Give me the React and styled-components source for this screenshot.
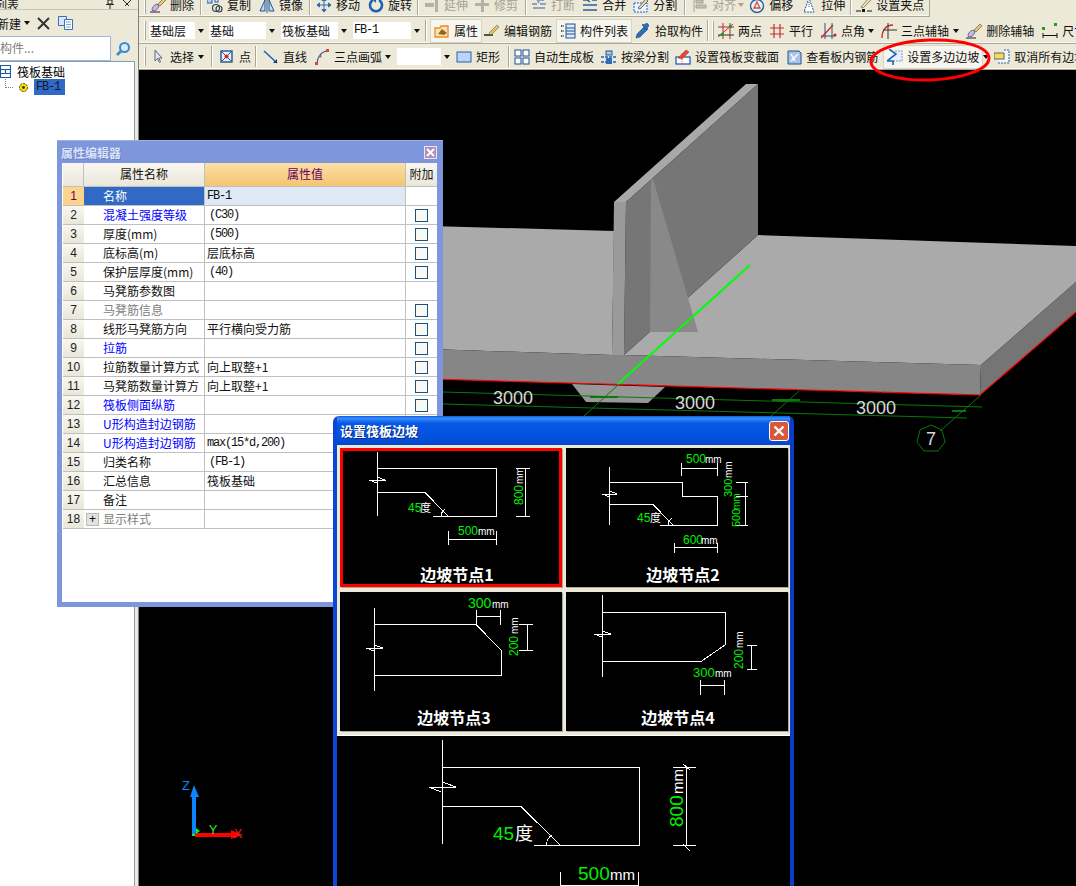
import React from "react";
import styled, { createGlobalStyle, css } from "styled-components";

const GlobalStyle = createGlobalStyle`
  html, body { margin: 0; padding: 0; background: #000; }
  body { font-family: "Noto Sans CJK SC", "Liberation Sans", sans-serif; font-size: 12px; }
`;

const Page = styled.div`
  position: relative;
  display: flex;
  width: 1076px;
  height: 886px;
  overflow: hidden;
  background: #000;
`;

/* ---------- left list panel ---------- */
const Side = styled.aside`
  display: flex;
  flex-direction: column;
  flex: 0 0 139px;
  box-sizing: border-box;
  background: #ece9d8;
  border-right: 1px solid #808080;
`;
const SideHead = styled.div`
  display: flex;
  align-items: center;
  gap: 8px;
  height: 9px;
  padding-right: 6px;
  border-bottom: 1px solid #c9c6b6;
  color: #222;
  line-height: 9px;
  overflow: hidden;
`;
const SideName = styled.span`
  flex: 1;
  margin-left: -5px;
`;
const SideTools = styled.div`
  display: flex;
  align-items: center;
  height: 26px;
  color: #111;
`;
const NewLabel = styled.span`
  margin-left: -3px;
`;
const SearchRow = styled.div`
  display: flex;
  align-items: center;
  gap: 4px;
  height: 25px;
`;
const SearchBox = styled.div`
  box-sizing: border-box;
  width: 111px;
  height: 25px;
  background: #fff;
  border: 1px solid #9db8d2;
  border-left: 0;
  color: #808080;
  line-height: 22px;
`;
const Tree = styled.div`
  flex: 1;
  margin-right: 3px;
  padding-top: 1px;
  background: #fff;
  border-top: 1px solid #7f9db9;
  border-right: 1px solid #7f9db9;
`;
const TreeRow = styled.div`
  display: flex;
  align-items: center;
  gap: ${(p) => p.$gap || 6}px;
  height: 16px;
  color: #000;
`;
const TreeLine = styled.span`
  width: 7px;
  height: 8px;
  margin: -8px 0 0 5px;
  border-left: 1px dotted #808080;
  border-bottom: 1px dotted #808080;
`;
const Selected = styled.span`
  width: 29px;
  height: 16px;
  padding-left: 2px;
  background: #316ac5;
  color: #0c1a30;
  font: 12px/16px "Liberation Mono", monospace;
  letter-spacing: -1.2px;
`;
const SideIcon = styled.svg`
  display: block;
  flex: 0 0 auto;
  margin-left: ${(p) => p.$ml || 0}px;
`;

/* ---------- toolbars ---------- */
const Main = styled.main`
  display: flex;
  flex: 1;
  flex-direction: column;
  min-width: 0;
  background: #ece9d8;
`;
const Bar = styled.div`
  display: flex;
  flex: 0 0 auto;
  align-items: center;
  box-sizing: border-box;
  width: ${(p) => p.$w || "auto"};
  height: ${(p) => p.$h}px;
  margin-bottom: ${(p) => p.$mb || 0}px;
  padding-left: 5px;
  padding-bottom: ${(p) => p.$pb || 0}px;
  background: #ece9d8;
  border-bottom: 1px solid #aca899;
  border-right: ${(p) => (p.$w ? "1px solid #aca899" : "0")};
  box-shadow: inset 0 -1px 0 #f8f7f0;
  overflow: hidden;
  white-space: nowrap;
`;
const Grip = styled.i`
  flex: 0 0 2px;
  height: 19px;
  margin-left: ${(p) => p.$ml || 0}px;
  border-left: 1px solid #fff;
  border-right: 1px solid #aca899;
  box-sizing: border-box;
`;
const Sep = styled.i`
  flex: 0 0 2px;
  height: 21px;
  margin-left: ${(p) => p.$ml}px;
  border-left: 1px solid #aca899;
  border-right: 1px solid #fff;
  box-sizing: border-box;
`;
const Tool = styled.span`
  display: flex;
  flex: 0 0 auto;
  align-items: center;
  gap: 4px;
  height: 16px;
  margin-left: ${(p) => p.$ml}px;
  color: ${(p) => (p.$off ? "#a5a294" : "#111")};
  line-height: 16px;
  ${(p) =>
    p.$on &&
    css`
      background: #f6f5ee;
      box-shadow: 0 0 0 3px #f6f5ee, 0 0 0 4px #d8d5c5;
    `}
`;
const Caret = styled.i`
  flex: 0 0 0;
  margin-left: ${(p) => p.$ml}px;
  border-left: 3.5px solid transparent;
  border-right: 3.5px solid transparent;
  border-top: 4px solid ${(p) => (p.$off ? "#a5a294" : "#111")};
`;
const Combo = styled.span`
  position: relative;
  flex: 0 0 ${(p) => p.$w}px;
  box-sizing: border-box;
  height: 17px;
  margin-left: ${(p) => p.$ml}px;
  padding-left: 1px;
  background: #fff;
  color: #111;
  font-family: ${(p) => (p.$mono ? '"Liberation Mono", monospace' : "inherit")};
  letter-spacing: ${(p) => (p.$mono ? "-1.2px" : "0")};
  line-height: 17px;
  &::after {
    content: "";
    position: absolute;
    top: 0;
    right: 0;
    width: 10px;
    height: 17px;
    background: #ece9d8;
  }
  &::before {
    content: "";
    position: absolute;
    z-index: 1;
    top: 7px;
    right: 1.5px;
    border-left: 3.5px solid transparent;
    border-right: 3.5px solid transparent;
    border-top: 4px solid #111;
  }
`;
const IconSvg = styled.svg`
  display: block;
  flex: 0 0 16px;
  width: 16px;
  height: 16px;
`;

const ink = { fill: "none", strokeWidth: 1.2 };
const icons = {
  brush: <><path d="M0 15h10" stroke="#222" /><path d="M2 13c0-3 2-5 5-6l2 2c-1 3-3 5-6 5z" fill="#c8b8e0" stroke="#5a4a88" strokeWidth=".8" /><path d="M8 7 14 1l2 2-6 6z" fill="#e4c47a" stroke="#76602a" strokeWidth=".7" /></>,
  copy: <><rect x="0" y="1" width="5" height="5" fill="#b8d0f0" stroke="#2a5a9a" /><circle cx="9" cy="11" r="3.5" {...ink} stroke="#345" /><circle cx="12" cy="12" r="3" {...ink} stroke="#345" /><rect x="8" y="2" width="3" height="3" fill="#e4ecf8" stroke="#2a5a9a" /></>,
  mirror: <><path d="M1 14 6 3v11zM15 14 10 3v11z" fill="#c5d8f2" stroke="#23558f" /><path d="M8 0v16" stroke="#23558f" /></>,
  move: <path d="M8 1v14M1 8h14M8 1 6 3.5h4zM8 15l-2-2.5h4zM1 8l2.5-2v4zM15 8l-2.5-2v4z" fill="#2f6db5" stroke="#2f6db5" />,
  rotate: <><path d="M5 3a6 6 0 1 0 6 0" fill="none" stroke="#1f63b8" strokeWidth="2.6" /><path d="M8 0v6L5 3z" fill="#1f63b8" /></>,
  extend: <path d="M1 6h9v4H1zM11 1h3v14h-3z" fill="#b5b2a4" />,
  trim: <path d="M1 6h14v3H1zM7 1h3v14H7z" fill="#b5b2a4" />,
  split: <path d="M1 7h5M9 7h6M2 11h12M6 2l2 4M8 3h5" fill="none" stroke="#6f8db0" strokeWidth="1.6" />,
  merge: <path d="M1 3h6M10 3h5M1 8h14M1 13h14M8 1l-3 2 3 2" fill="none" stroke="#2f5f96" strokeWidth="1.4" />,
  cut: <><rect x="1" y="6" width="13" height="9" fill="#eef4ff" stroke="#1c5fdc" strokeDasharray="2 1" /><path d="M5 11 13 2l2 2-8 8z" fill="#e6dcae" stroke="#333" strokeWidth=".7" /></>,
  align: <path d="M2 1v14M4 3h7v3H4zM4 8h10v3H4z" fill="#c5c2b4" stroke="#a5a294" />,
  offset: <><circle cx="8" cy="9" r="6.5" fill="#e8f0fa" stroke="#24609a" strokeWidth="1.4" /><path d="M8 5 11 11H5z" fill="none" stroke="#d84a30" strokeWidth="1.3" /></>,
  stretch: <><path d="M8 1 3 15h10z" fill="#fff" stroke="#23558f" strokeDasharray="2 1" /><path d="M8 5v6" stroke="#23558f" strokeDasharray="1 1" /></>,
  grip: <><path d="M5 10 13 1l2 2-8 8z" fill="#efe2a0" stroke="#665" strokeWidth=".7" /><path d="M0 14h5M11 14h5" stroke="#111" /><rect x="6" y="12" width="3" height="3" fill="#111" /></>,
  attr: <><path d="M1 5h5l1-2h7v11H1z" fill="#fbe3b0" stroke="#f08a24" strokeWidth="1.3" /><path d="M4 11 8 6l5 4-3 2z" fill="#8a6a20" /></>,
  edit: <><path d="M0 12h9" stroke="#111" strokeWidth="1.4" /><path d="M5 10 13 2l2 2-8 8z" fill="#eac25a" stroke="#775" strokeWidth=".7" /></>,
  list: <><path d="M1 3h3M1 8h3M1 13h3" stroke="#222" strokeDasharray="1.4 1" strokeWidth="1.6" /><rect x="6" y="1" width="9" height="14" fill="#dfe9f7" stroke="#23558f" /><path d="M6 5h9M6 8h9M6 11h9" stroke="#23558f" /></>,
  pick: <path d="M1 15 2 11l7-7 3 3-7 7zM9 2c2-2 3-2 4-1s1 3-1 4l1 1-1 1-5-5 1-1z" fill="#2f6db5" stroke="#174a86" strokeWidth=".6" />,
  twopt: <><path d="M0 14 15 1" stroke="#d42424" /><path d="M5 0v16M12 0v16M0 4h16" stroke="#b02a2a" /><path d="M0 12h16" stroke="#333" /><rect x="3" y="10" width="3" height="3" fill="#2a9a2a" /><rect x="11" y="2" width="3" height="3" fill="#2a9a2a" /></>,
  parallel: <path d="M1 5h14M1 11h14M5 1v14M11 1v14" stroke="#c03030" strokeWidth="1.2" fill="none" />,
  angle: <><path d="M4 0v16M11 0v16M0 13h14" stroke="#23558f" /><path d="M0 15 12 2" stroke="#d42424" strokeWidth="1.3" /><circle cx="14" cy="12" r="1.6" fill="#d42424" /></>,
  arcaxis: <><path d="M1 15C1 7 5 2 12 2" fill="none" stroke="#d42424" strokeWidth="1.3" /><path d="M7 0v16M2 7h14" stroke="#333" /></>,
  ruler: <><rect x="0" y="4" width="3" height="3" fill="#1ea01e" /><rect x="12" y="0" width="3" height="3" fill="#1ea01e" /><path d="M1 10v5M15 10v5M1 12.5h14" stroke="#111" /></>,
  cursor: <path d="M5 1v11l2.5-2.5 2 4 1.2-.8-2-3.6h3.3z" fill="#dfe6f4" stroke="#667" />,
  dot: <><rect x="2" y="2" width="11" height="11" fill="#e8eefa" stroke="#23558f" strokeWidth="1.4" /><path d="M2 2 13 13M13 2 2 13" stroke="#23558f" /><circle cx="7.5" cy="7.5" r="2" fill="#d42424" /></>,
  line: <><path d="M1 2 14 14" stroke="#1f63b8" strokeWidth="1.6" /><path d="M14 14h-4l4-4z" fill="#1f3d6e" /></>,
  arc: <><path d="M3 15C3 8 7 3 13 2" fill="none" stroke="#1f63b8" strokeWidth="1.2" /><rect x="1" y="13" width="3" height="3" fill="#d84a30" /><rect x="5" y="6" width="2.4" height="2.4" fill="#d84a30" /><rect x="12" y="0" width="3" height="3" fill="#d84a30" /></>,
  rect: <rect x="1" y="3" width="14" height="10" fill="#bcd4f6" stroke="#2a5fb0" />,
  grid: <><rect x="1" y="1" width="6" height="6" fill="#fff" stroke="#1c4f96" /><rect x="9" y="1" width="6" height="6" fill="#fff" stroke="#1c4f96" /><rect x="1" y="9" width="6" height="6" fill="#fff" stroke="#1c4f96" /><rect x="9" y="9" width="6" height="6" fill="#fff" stroke="#1c4f96" /></>,
  beam: <><rect x="5" y="2" width="6" height="4" fill="#a9c8f0" stroke="#23558f" /><path d="M0 8h16M0 13h16" stroke="#1f63b8" strokeWidth="1.6" strokeDasharray="3 1" /><rect x="5" y="9" width="6" height="6" fill="#2f6db5" /></>,
  section: <><rect x="1" y="8" width="14" height="7" fill="#fff" stroke="#1f5fc0" strokeWidth="1.3" /><path d="M3 9 11 1l3 2-7 7z" fill="#e04a3a" stroke="#a82a20" strokeWidth=".5" /><path d="M7 4v12" stroke="#e04a3a" strokeDasharray="1 1" /></>,
  rebar: <><path d="M2 2h11l2 2v11H2z" fill="#a7c3e6" stroke="#23558f" /><path d="M5 12 12 5M5 5l4 7" stroke="#fff" strokeWidth="1.4" /></>,
  slope: <><path d="M8 2h7v10H6" fill="#e8eff8" stroke="#7d97bb" strokeDasharray="2 1" /><path d="M2 0 9 5 0 12H6V16" fill="none" stroke="#1f63b8" strokeWidth="1.6" /></>,
  cancel: <><path d="M10 1h5v13H4" fill="#f4f7fc" stroke="#2a5fa8" strokeDasharray="2 1" /><rect x="0" y="4" width="10" height="6" fill="#f5d86a" stroke="#665" /></>,
};

const Icon = ({ name }) => <IconSvg viewBox="0 0 16 16">{icons[name]}</IconSvg>;

const rowOne = [
  ["t", 4, "brush", "删除"], ["s", 6], ["t", 5, "copy", "复制"], ["t", 8, "mirror", "镜像"], ["s", 6],
  ["t", 5, "move", "移动"], ["t", 8, "rotate", "旋转"], ["s", 5], ["d", 5, "extend", "延伸"], ["d", 6, "trim", "修剪"],
  ["s", 7], ["d", 4, "split", "打断"], ["t", 7, "merge", "合并"], ["t", 7, "cut", "分割"], ["s", 7],
  ["d", 6, "align", "对齐"], ["cd", 2], ["t", 5, "offset", "偏移"], ["t", 8, "stretch", "拉伸"], ["s", 5], ["t", 4, "grip", "设置夹点"],
];
const rowTwo = [
  ["b", 3, 56, "基础层"], ["b", 4, 67, "基础"], ["b", 5, 67, "筏板基础"], ["m", 5, 68, "FB-1"], ["s", 4],
  ["o", 7, "attr", "属性"], ["t", 6, "edit", "编辑钢筋"], ["o", 8, "list", "构件列表"], ["t", 7, "pick", "拾取构件"], ["s", 4],
  ["g", 3], ["t", 4, "twopt", "两点"], ["t", 7, "parallel", "平行"], ["t", 8, "angle", "点角"], ["c", 3],
  ["t", 7, "arcaxis", "三点辅轴"], ["c", 4], ["t", 7, "brush", "删除辅轴"], ["t", 8, "ruler", "尺寸"],
];
const rowThree = [
  ["t", 4, "cursor", "选择"], ["c", 4], ["s", 7], ["t", 6, "dot", "点"], ["s", 4], ["t", 6, "line", "直线"],
  ["t", 7, "arc", "三点画弧"], ["c", 3], ["b", 6, 54, ""], ["t", 5, "rect", "矩形"], ["s", 8], ["t", 4, "grid", "自动生成板"],
  ["t", 7, "beam", "按梁分割"], ["t", 6, "section", "设置筏板变截面"], ["t", 7, "rebar", "查看板内钢筋"],
  ["o", 9, "slope", "设置多边边坡"], ["c", 4], ["t", 5, "cancel", "取消所有边坡"],
];

const renderBar = (items) =>
  items.map(([kind, ml, a, b], i) => {
    if (kind === "s") return <Sep key={i} $ml={ml} />;
    if (kind === "g") return <Grip key={i} $ml={ml} />;
    if (kind === "c") return <Caret key={i} $ml={ml} />;
    if (kind === "cd") return <Caret key={i} $ml={ml} $off />;
    if (kind === "b") return <Combo key={i} $ml={ml} $w={a}>{b}</Combo>;
    if (kind === "m") return <Combo key={i} $ml={ml} $w={a} $mono>{b}</Combo>;
    return (
      <Tool key={i} $ml={ml} $off={kind === "d"} $on={kind === "o"}>
        <Icon name={a} />
        {b}
      </Tool>
    );
  });

/* ---------- 3d view ---------- */
const View = styled.div`
  position: relative;
  flex: 1;
  background: #000;
`;
const Scene = styled.svg`
  display: block;
  width: 937px;
  height: 816px;
`;
const DimText = styled.text`
  fill: #d8d8d8;
  font: 18px "Liberation Sans", sans-serif;
  text-anchor: middle;
`;
const AxisText = styled.text`
  fill: ${(p) => p.$c};
  font: 13px "Liberation Sans", sans-serif;
  text-anchor: middle;
`;

const View3D = () => (
  <Scene viewBox="139 70 937 816">
    <polygon points="430,226 614,231 612,355 430,349" fill="#aaa" />
    <polygon points="624,355 758,235 1076,246 1076,282 981,365" fill="#aaa" />
    <polygon points="430,349 612,355 624,355 981,365 980,395 430,379" fill="#868686" />
    <polygon points="981,365 1076,282 1076,312 980,395" fill="#757575" />
    <polygon points="572,384 665,387 648,403 586,402" fill="#979797" />
    <polygon points="746,84 758,84 626,202 614,202" fill="#a8a8a8" />
    <polygon points="758,84 758,235 624,355 626,202" fill="#767676" />
    <polygon points="614,202 626,202 624,355 612,355" fill="#9a9a9a" />
    <polygon points="653,179 651,180 650,332 698,332" fill="#898989" />
    <path d="M430 379 980 395 1076 312" fill="none" stroke="#f00" strokeWidth="1.2" strokeDasharray="40 1" />
    <g fill="none" stroke="#0a780a" strokeWidth="1">
      <path d="M443 392 982 407M443 404 967 418" />
      <path d="M618 385 584 416M799 391 771 416M981 395 940 431" />
      <path d="M590 397H618M772 400H800M952 411H966" strokeWidth="2" />
    </g>
    <path d="M618 384 750 265" stroke="#0f0" strokeWidth="2" />
    <DimText x="513" y="404">3000</DimText>
    <DimText x="695" y="409">3000</DimText>
    <DimText x="876" y="414">3000</DimText>
    <polygon points="931,425 942,430 945,442 938,451 924,451 917,442 920,430" fill="none" stroke="#0a780a" />
    <DimText x="931" y="445">7</DimText>
    <path d="M194 785 199 797 196 797V834H192V797H190z" fill="#0a84ff" />
    <path d="M195 833H231V830L243 835 231 839V837H195z" fill="#f00" />
    <path d="M196 828 200 831 196 834z" fill="#0f0" />
    <rect x="192" y="834" width="3" height="2" fill="#0f0" />
    <AxisText x="186" y="790" $c="#0a84ff">Z</AxisText>
    <AxisText x="213" y="834" $c="#2ee62e">Y</AxisText>
    <AxisText x="238" y="838" $c="#d82020">X</AxisText>
  </Scene>
);

/* ---------- property window ---------- */
const PropWin = styled.section`
  position: absolute;
  top: 140px;
  left: 57px;
  width: 386px;
  height: 467px;
  box-sizing: border-box;
  padding: 0 6px 5px 5px;
  background: #7e96dc;
  border-top: 1px solid #9aaee6;
`;
const PropTitle = styled.header`
  display: flex;
  align-items: center;
  justify-content: space-between;
  height: 22px;
  margin-left: -1px;
  color: #d8e2f8;
  font-size: 12px;
  font-weight: 700;
  text-shadow: 1px 1px 0 #6a80c4;
`;
const SmallClose = styled.span`
  display: flex;
  align-items: center;
  justify-content: center;
  width: 13px;
  height: 13px;
  background: #b18fba;
  border: 1px solid #e8e8f4;
  box-sizing: border-box;
`;
const PropBody = styled.div`
  height: 439px;
  padding-left: 1px;
  background: #fff;
`;
const Row = styled.div`
  display: grid;
  grid-template-columns: 21px 121px 201px 31px;
  height: ${(p) => (p.$head ? 24 : 19)}px;
`;
const Cell = styled.div`
  box-sizing: border-box;
  overflow: hidden;
  white-space: nowrap;
  border-right: 1px solid #c0c0c0;
  border-bottom: 1px solid #c0c0c0;
`;
const Num = styled(Cell)`
  border-right: 0;
  background: ${(p) => (p.$on ? "#fbd38d" : "linear-gradient(#f8f7f1, #e9e6d9)")};
  color: ${(p) => (p.$on ? "#660066" : "#222")};
  font: 12px/18px "Liberation Sans", sans-serif;
  text-align: center;
`;
const Head = styled(Cell)`
  border-right: ${(p) => (p.$last ? "0" : "1px solid #c0c0c0")};
  background: ${(p) => (p.$on ? "linear-gradient(#fbe0a6, #f4c471)" : "linear-gradient(#f8f7f1, #e9e6d9)")};
  color: ${(p) => (p.$on ? "#660066" : "#111")};
  line-height: 22px;
  text-align: center;
`;
const Name = styled(Cell)`
  display: flex;
  align-items: center;
  padding-left: ${(p) => (p.$tree ? 2 : 19)}px;
  background: ${(p) => (p.$on ? "#316ac5" : "#fff")};
  color: ${(p) => (p.$on ? "#fff" : p.$tone === "blue" ? "#0000ff" : p.$tone === "gray" ? "#808080" : "#111")};
  line-height: 18px;
`;
const Value = styled(Cell)`
  padding-left: ${(p) => (p.$inset ? 4 : 2)}px;
  background: ${(p) => (p.$on ? "#dfe8f5" : "#fff")};
  color: #111;
  font-family: ${(p) => (p.$mono ? '"Liberation Mono", monospace' : "inherit")};
  letter-spacing: ${(p) => (p.$mono ? "-1.2px" : "0")};
  line-height: 18px;
`;
const Extra = styled(Cell)`
  display: flex;
  align-items: center;
  justify-content: center;
  border-right: 0;
`;
const Check = styled.i`
  width: 13px;
  height: 13px;
  box-sizing: border-box;
  border: 1px solid #1c5180;
  background: #f8f8f4;
`;
const Plus = styled.span`
  width: 13px;
  height: 13px;
  margin-right: 4px;
  box-sizing: border-box;
  background: #e2e2de;
  border: 1px solid #b8b8b8;
  color: #111;
  font: 12px/10px "Liberation Sans", sans-serif;
  text-align: center;
`;

// flags: m = mono value, p = inset value, c = has a check box, t = tree row
const props = [
  ["名称", "FB-1", "", "m"],
  ["混凝土强度等级", "(C30)", "blue", "mpc"],
  ["厚度(mm)", "(500)", "", "mpc"],
  ["底标高(m)", "层底标高", "", "c"],
  ["保护层厚度(mm)", "(40)", "", "mpc"],
  ["马凳筋参数图", "", "", ""],
  ["马凳筋信息", "", "gray", "c"],
  ["线形马凳筋方向", "平行横向受力筋", "", "c"],
  ["拉筋", "", "blue", "c"],
  ["拉筋数量计算方式", "向上取整+1", "", "c"],
  ["马凳筋数量计算方", "向上取整+1", "", "c"],
  ["筏板侧面纵筋", "", "blue", "c"],
  ["U形构造封边钢筋", "", "blue", ""],
  ["U形构造封边钢筋", "max(15*d,200)", "blue", "m"],
  ["归类名称", "(FB-1)", "", "mp"],
  ["汇总信息", "筏板基础", "", ""],
  ["备注", "", "", ""],
  ["显示样式", "", "gray", "t"],
];

const PropertyWindow = () => (
  <PropWin>
    <PropTitle>
      属性编辑器
      <SmallClose>
        <svg width="9" height="9" viewBox="0 0 9 9">
          <path d="M1 1 8 8M8 1 1 8" stroke="#fff" strokeWidth="2" />
        </svg>
      </SmallClose>
    </PropTitle>
    <PropBody>
      <Row $head>
        <Head />
        <Head>属性名称</Head>
        <Head $on>属性值</Head>
        <Head $last>附加</Head>
      </Row>
      {props.map(([name, value, tone, flags], i) => (
        <Row key={i}>
          <Num $on={i === 0}>{i + 1}</Num>
          <Name $on={i === 0} $tone={tone} $tree={flags === "t"}>
            {flags === "t" && <Plus>+</Plus>}
            {name}
          </Name>
          <Value $on={i === 0} $mono={flags.includes("m")} $inset={flags.includes("p")}>{value}</Value>
          <Extra>{flags.includes("c") && <Check />}</Extra>
        </Row>
      ))}
    </PropBody>
  </PropWin>
);

/* ---------- slope dialog ---------- */
const Dialog = styled.section`
  position: absolute;
  top: 416px;
  left: 333px;
  width: 461px;
  height: 470px;
  box-sizing: border-box;
  border-left: 4px solid #0a46d8;
  border-right: 4px solid #0a3cc8;
  border-radius: 6px 6px 0 0;
  background: #ece9d8;
  overflow: hidden;
`;
const DialogTitle = styled.header`
  display: flex;
  align-items: center;
  justify-content: space-between;
  height: 29px;
  margin: 0 -4px;
  padding: 0 5px 0 7px;
  background: linear-gradient(#0a5ae8 0, #3a8cf6 8%, #0658e6 25%, #0450dc 80%, #0246c8 100%);
  color: #fff;
  font-size: 13px;
  font-weight: 700;
  text-shadow: 1px 1px 0 #0a2a80;
`;
const BigClose = styled.span`
  display: flex;
  align-items: center;
  justify-content: center;
  width: 20px;
  height: 20px;
  box-sizing: border-box;
  border: 1px solid #fff;
  border-radius: 3px;
  background: #d9573a;
`;
const Choices = styled.div`
  display: grid;
  grid-template-columns: 222px 222px;
  grid-auto-rows: 139px;
  gap: 5px 4px;
  padding: 3px 0 4px 3px;
`;
const Choice = styled.div`
  background: #000;
  box-shadow: 1px 1px 0 #aca899;
  ${(p) =>
    p.$on &&
    css`
      outline: 3px solid #f00;
      outline-offset: -3px;
    `}
`;
const Preview = styled.div`
  height: 151px;
  background: #000;
  border-top: 1px solid #fff;
`;
const Drawing = styled.svg`
  display: block;
  width: 100%;
  height: 100%;
`;
const Lines = styled.path`
  fill: none;
  stroke: #fff;
  stroke-width: 1;
  shape-rendering: crispEdges;
`;
const Green = styled.text`
  fill: #00f000;
  font: ${(p) => p.$s || 12}px "Liberation Sans", sans-serif;
`;
const White = styled.text`
  fill: #fff;
  font: ${(p) => p.$s || 12}px "Liberation Sans", "Noto Sans CJK SC", sans-serif;
`;
const Caption = styled.text`
  fill: #fff;
  font: 700 16px "Noto Sans CJK SC", "Liberation Sans", sans-serif;
  text-anchor: middle;
`;
const Up = ({ x, y, as: Tag = Green, s, children }) => (
  <Tag x={x} y={y} $s={s} transform={`rotate(-90 ${x} ${y})`}>{children}</Tag>
);

const NodeOne = () => (
  <Drawing viewBox="340 448 222 139">
    <Lines d="M377.5 452V516M377.5 468.5H496V516.5H433M377.5 492.5H425L448 516M369 480H386M369 480 377 483M377 477 385 480" />
    <Lines d="M441 516C441 512 443 511 445 509M525.5 468V517M516 468.5H530M516 516.5H530M448.5 531V545M496.5 531V545M448 539.5H496" />
    <Green x="408" y="512" $s={12}>45</Green>
    <White x="420" y="512" $s={11}>度</White>
    <Up x="523" y="505" s={12}>800</Up>
    <Up x="523" y="484" as={White} s={10}>mm</Up>
    <Green x="458" y="535" $s={12}>500</Green>
    <White x="478" y="535" $s={10}>mm</White>
    <Caption x="457" y="581">边坡节点1</Caption>
  </Drawing>
);

const NodeTwo = () => (
  <Drawing viewBox="566 448 222 139">
    <Lines d="M609.5 467V525M609.5 482.5H682V496.5H717.5V525H660M609.5 504.5H653L673 525M602 494H617M602 494 610 497M610 491 617 494" />
    <Lines d="M668 525C668 521 670 520 672 518M681.5 463V476M717.5 463V476M681 468.5H717M736 482.5H748M736 496.5H748M736 525.5H748M745.5 482V526M674.5 543V553M717.5 543V553M674 547.5H717" />
    <Green x="637" y="522" $s={12}>45</Green>
    <White x="650" y="522" $s={11}>度</White>
    <Green x="686" y="463" $s={12}>500</Green>
    <White x="705" y="463" $s={10}>mm</White>
    <Up x="732" y="497" s={11}>300</Up>
    <Up x="732" y="478" as={White} s={10}>mm</Up>
    <Up x="740" y="527" s={11}>500</Up>
    <Up x="740" y="510" as={Green} s={10}>mm</Up>
    <Green x="683" y="544" $s={12}>600</Green>
    <White x="701" y="544" $s={10}>mm</White>
    <Caption x="683" y="581">边坡节点2</Caption>
  </Drawing>
);

const NodeThree = () => (
  <Drawing viewBox="340 592 222 139">
    <Lines d="M374.5 608V691M374.5 624.5H476L501 650V675.5H374.5M366 648H383M366 648 374 651M374 645 383 648" />
    <Lines d="M476.5 610V625M500.5 610V625M476 616.5H500M527.5 624V651M519 624.5H533M519 650.5H533" />
    <Green x="468" y="608" $s={14}>300</Green>
    <White x="492" y="608" $s={10}>mm</White>
    <Up x="518" y="656" s={12}>200</Up>
    <Up x="518" y="634" as={White} s={10}>mm</Up>
    <Caption x="454" y="724">边坡节点3</Caption>
  </Drawing>
);

const NodeFour = () => (
  <Drawing viewBox="566 592 222 139">
    <Lines d="M602.5 595V677M602.5 612.5H725V645L701 661.5H602.5M594 634H611M594 634 602 637M602 631 611 634" />
    <Lines d="M751.5 645V669M747 645.5H757M747 669.5H757M700.5 680V695M724.5 680V695M700 685.5H724" />
    <Green x="693" y="677" $s={13}>300</Green>
    <White x="715" y="677" $s={10}>mm</White>
    <Up x="743" y="669" s={12}>200</Up>
    <Up x="743" y="648" as={White} s={10}>mm</Up>
    <Caption x="678" y="724">边坡节点4</Caption>
  </Drawing>
);

const BigNode = () => (
  <Drawing viewBox="337 735 453 151">
    <Lines d="M442.5 739V843M442.5 766.5H639V844.5H534M442.5 805.5H521L560 844M429 786H456M429 786 441 791M442 781 456 786" />
    <Lines d="M547 844C546 840 549 836 552 834M686.5 766V844M673 766.5H696M673 844.5H696M683 763 690 769M683 843 690 850M560.5 871V886M638.5 871V886M560 884.5H638" />
    <Green x="493" y="839" $s={19}>45</Green>
    <White x="515" y="839" $s={18}>度</White>
    <Up x="683" y="826" s={19}>800</Up>
    <Up x="683" y="793" as={White} s={15}>mm</Up>
    <Green x="578" y="879" $s={19}>500</Green>
    <White x="610" y="879" $s={15}>mm</White>
  </Drawing>
);

const SlopeDialog = () => (
  <Dialog>
    <DialogTitle>
      设置筏板边坡
      <BigClose>
        <svg width="12" height="12" viewBox="0 0 12 12">
          <path d="M1.5 1.5 10.5 10.5M10.5 1.5 1.5 10.5" stroke="#fff" strokeWidth="2.4" />
        </svg>
      </BigClose>
    </DialogTitle>
    <Choices>
      <Choice $on><NodeOne /></Choice>
      <Choice><NodeTwo /></Choice>
      <Choice><NodeThree /></Choice>
      <Choice><NodeFour /></Choice>
    </Choices>
    <Preview><BigNode /></Preview>
  </Dialog>
);

const Ring = styled.svg`
  position: absolute;
  top: 36px;
  left: 867px;
  width: 126px;
  height: 48px;
`;

export default function App() {
  return (
    <Page>
      <GlobalStyle />
      <Side>
        <SideHead>
          <SideName>列表</SideName>
          <SideIcon width="10" height="9" viewBox="0 0 10 9">
            <path d="M3 0h4v4H3zM1 4.5h8M5 5v4" fill="none" stroke="#222" />
          </SideIcon>
          <SideIcon width="9" height="9" viewBox="0 0 9 9">
            <path d="M0 0 6 6M8 0 2 6" stroke="#222" />
          </SideIcon>
        </SideHead>
        <SideTools>
          <NewLabel>新建</NewLabel>
          <Caret $ml={3} />
          <SideIcon width="13" height="13" viewBox="0 0 13 13" $ml={7}>
            <path d="M1 1 12 12M12 1 1 12" stroke="#333" strokeWidth="2" />
          </SideIcon>
          <SideIcon width="16" height="14" viewBox="0 0 16 14" $ml={8}>
            <path d="M.5.5h8v9h-8z" fill="#dbe7f8" stroke="#3a70b8" />
            <path d="M6.5 3.5h8v10h-8z" fill="#fff" stroke="#3a70b8" />
            <path d="M8 6h5M8 8.5h5M8 11h5" stroke="#7fa6d8" />
          </SideIcon>
        </SideTools>
        <SearchRow>
          <SearchBox>构件...</SearchBox>
          <SideIcon width="16" height="16" viewBox="0 0 16 16">
            <circle cx="9.5" cy="6.5" r="4.5" fill="#d8ecfa" stroke="#3a8ad0" strokeWidth="2" />
            <path d="M6 10 2 14" stroke="#3a8ad0" strokeWidth="2.6" />
          </SideIcon>
        </SearchRow>
        <Tree>
          <TreeRow>
            <SideIcon width="11" height="13" viewBox="0 0 11 13">
              <path d="M.5.5h10v12H.5zM.5 4.5h10M.5 8.5h10M5.5 4.5v4" fill="#fff" stroke="#1c5a9a" strokeWidth="1.2" />
            </SideIcon>
            筏板基础
          </TreeRow>
          <TreeRow $gap={5}>
            <TreeLine />
            <SideIcon width="11" height="11" viewBox="0 0 11 11">
              <circle cx="5.5" cy="5.5" r="4" fill="#f5e400" stroke="#333" strokeDasharray="2 1" />
              <circle cx="5.5" cy="5.5" r="1.4" fill="#333" />
            </SideIcon>
            <Selected>FB-1</Selected>
          </TreeRow>
        </Tree>
      </Side>
      <Main>
        <Bar $h={17} $pb={7} $w="791px" $mb={1}><Grip />{renderBar(rowOne)}</Bar>
        <Bar $h={26}><Grip />{renderBar(rowTwo)}</Bar>
        <Bar $h={26}><Grip />{renderBar(rowThree)}</Bar>
        <View><View3D /></View>
      </Main>
      <PropertyWindow />
      <SlopeDialog />
      <Ring viewBox="0 0 126 48">
        <ellipse cx="63" cy="24" rx="59" ry="20" fill="none" stroke="#f00" strokeWidth="3" transform="rotate(-2 63 24)" />
      </Ring>
    </Page>
  );
}
